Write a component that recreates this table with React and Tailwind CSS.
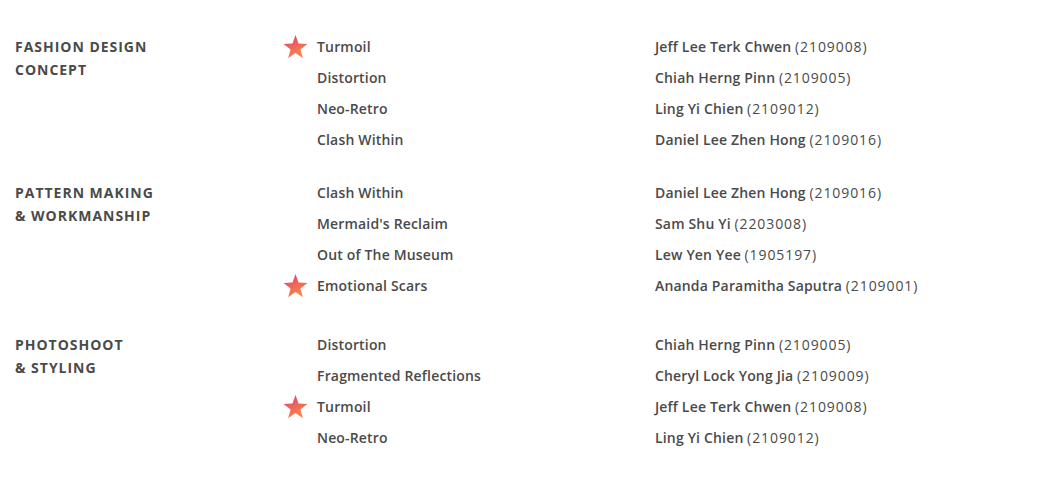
import React from 'react';

const sections = [
  {
    title: ['FASHION DESIGN', 'CONCEPT'],
    gap: '',
    rows: [
      { work: 'Turmoil', name: 'Jeff Lee Terk Chwen', id: '2109008', star: true },
      { work: 'Distortion', name: 'Chiah Herng Pinn', id: '2109005' },
      { work: 'Neo-Retro', name: 'Ling Yi Chien', id: '2109012' },
      { work: 'Clash Within', name: 'Daniel Lee Zhen Hong', id: '2109016' },
    ],
  },
  {
    title: ['PATTERN MAKING', '& WORKMANSHIP'],
    gap: 'mt-[22px]',
    rows: [
      { work: 'Clash Within', name: 'Daniel Lee Zhen Hong', id: '2109016' },
      { work: "Mermaid's Reclaim", name: 'Sam Shu Yi', id: '2203008' },
      { work: 'Out of The Museum', name: 'Lew Yen Yee', id: '1905197' },
      { work: 'Emotional Scars', name: 'Ananda Paramitha Saputra', id: '2109001', star: true },
    ],
  },
  {
    title: ['PHOTOSHOOT', '& STYLING'],
    gap: 'mt-[28px]',
    rows: [
      { work: 'Distortion', name: 'Chiah Herng Pinn', id: '2109005' },
      { work: 'Fragmented Reflections', name: 'Cheryl Lock Yong Jia', id: '2109009' },
      { work: 'Turmoil', name: 'Jeff Lee Terk Chwen', id: '2109008', star: true },
      { work: 'Neo-Retro', name: 'Ling Yi Chien', id: '2109012' },
    ],
  },
];

const Star = ({ uid }) => (
  <svg width="25" height="24" viewBox="0 0 24 23">
    <defs>
      <linearGradient id={uid} x1="0" y1="0" x2="0.5" y2="1">
        <stop offset="0%" stopColor="#e43a72" />
        <stop offset="100%" stopColor="#f6874a" />
      </linearGradient>
    </defs>
    <polygon
      points="12,0 14.9,8.2 23.5,8.5 16.7,13.8 19.1,22.2 12,17.3 4.9,22.2 7.3,13.8 0.5,8.5 9.1,8.2"
      fill={`url(#${uid})`}
    />
  </svg>
);

export default function App() {
  return (
    <div className="w-[1064px] h-[500px] bg-white text-[#4a4a4a] pl-[15px] pt-[31px]" style={{ fontFamily: '"Open Sans", sans-serif' }}>
      {sections.map((s, i) => (
        <div key={i} className={`flex ${s.gap}`}>
          <div className="w-[268px] pt-[4px] text-[14px] font-bold tracking-[0.07em] leading-[23px]">
            {s.title.map((t) => (
              <div key={t}>{t}</div>
            ))}
          </div>
          <div className="flex flex-col">
            {s.rows.map((r, j) => (
              <div key={j} className="flex items-center h-[31px] text-[14px]">
                <div className="w-[34px] flex items-center justify-start">{r.star && <Star uid={`star-${i}-${j}`} />}</div>
                <div className="w-[338px] font-semibold tracking-[0.012em]">{r.work}</div>
                <div>
                  <span className="font-semibold tracking-[0.012em]">{r.name}</span>{' '}
                  <span className="font-normal tracking-[0.065em]">({r.id})</span>
                </div>
              </div>
            ))}
          </div>
        </div>
      ))}
    </div>
  );
}
